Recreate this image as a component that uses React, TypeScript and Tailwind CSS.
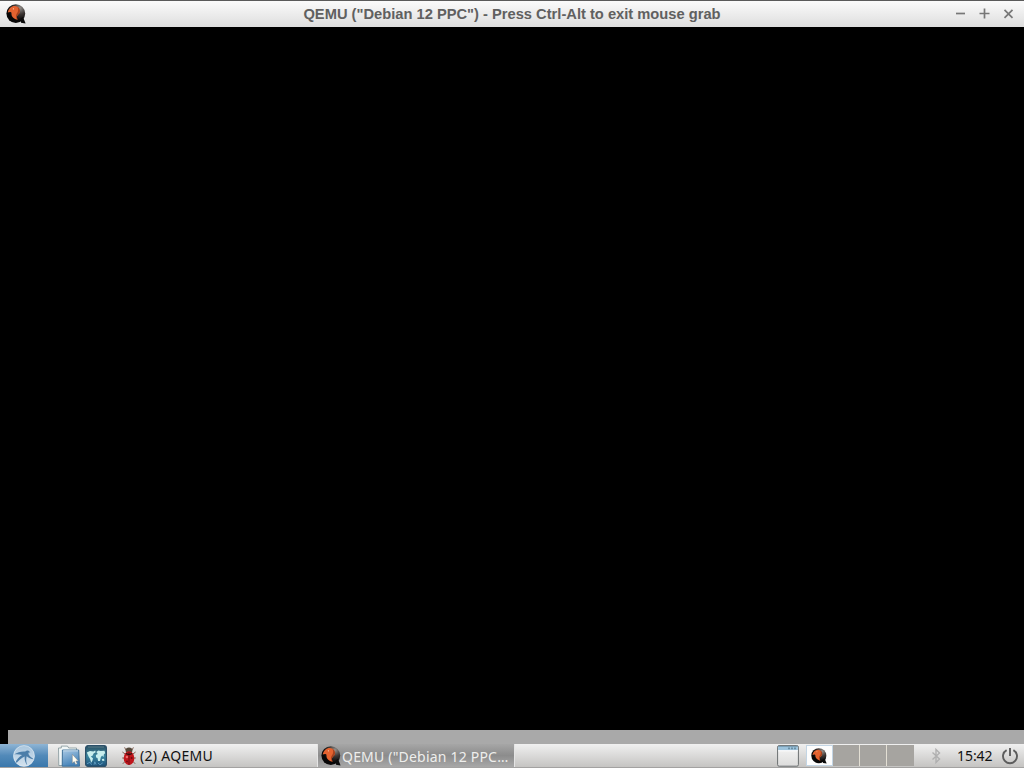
import { type ReactNode } from "react";

function QemuIcon({ id, className }: { id: string; className?: string }) {
    return (
        <svg viewBox="0 0 20 20" className={className}>
            <defs>
                <radialGradient id={id} cx="0.72" cy="0.2" r="0.65">
                    <stop offset="0" stopColor="#94908c" />
                    <stop offset="0.5" stopColor="#3d3735" />
                    <stop offset="1" stopColor="#080707" />
                </radialGradient>
            </defs>
            <circle cx="9.8" cy="9.6" r="9.4" fill={`url(#${id})`} />
            <path d="M14.5 14.5L17 13l2.6 6.4-4.6-.6z" fill="#0b0b0b" />
            <path
                d="M1.8 8.6C2.6 4.6 5.6 1.9 9 2.1c3 .2 5 2.4 5 5 0 2-1.3 3.1-2.4 4.2-1 1-1 2.2 0 4.5-2.8-.5-5.2-2.2-5.9-4.4-.4-1.4.1-2.5-.6-3.1-.8-.6-2.1-.3-3.3.3z"
                fill="#e4622f"
            />
            <path d="M11.4 2.9c1.7.9 2.6 2.4 2.6 4.2 0 2-1.3 3.1-2.4 4.2-1 1-1 2.2 0 4.5-1.4-1.3-2-3-1.5-4.6.6-1.8 2-3 2.1-5.1.1-1.2-.2-2.2-.8-3.2z" fill="#a4421f" />
            <circle cx="7.4" cy="4.8" r="0.6" fill="#f8d0b8" />
        </svg>
    );
}

function MenuLogo() {
    return (
        <svg viewBox="0 0 24 24" className="h-6 w-6">
            <defs>
                <linearGradient id="menu-disc" x1="0" y1="0" x2="0" y2="1">
                    <stop offset="0" stopColor="#a9c6de" />
                    <stop offset="1" stopColor="#d3e2ee" />
                </linearGradient>
            </defs>
            <circle cx="12" cy="12" r="10.6" fill="url(#menu-disc)" />
            <path
                d="M2 10.4C5.6 8.2 9.6 7.2 13.2 7.6c1-.9 2.2-1.4 3.3-.9l1.8 1.5-2 .6c0 2.4 2.2 4.6 6 6.6-3.4-.5-6-1.6-7.6-3.2-.9 3-.6 6.2.9 9.6-2.2-2.6-3.3-5.8-2.9-9.4-3.2 1.4-6.4 4-8.6 7.2l-.8-1.2c1.6-3.2 3.8-5.6 6.8-7.4-2.8-.8-5.4-1-8.1-.6z"
                fill="#4c7ea9"
            />
            <circle cx="12" cy="12" r="10.4" fill="none" stroke="#e5eef5" strokeWidth="0.6" />
        </svg>
    );
}

function FilesIcon() {
    return (
        <svg viewBox="0 0 22 22" className="h-[22px] w-[22px]">
            <defs>
                <linearGradient id="folder" x1="0" y1="0" x2="0.4" y2="1">
                    <stop offset="0" stopColor="#a9c9e4" />
                    <stop offset="1" stopColor="#4482b8" />
                </linearGradient>
            </defs>
            <path d="M.5 3h2.8V1.1h6.2L10.7 3h7.8v3l-14 1v13.5H.8z" fill="#f2f7f7" stroke="#819498" strokeWidth="0.8" />
            <path d="M4.4 5h16.3l.8 16.2H4.2z" fill="url(#folder)" stroke="#386c96" strokeWidth="0.9" />
            <path d="M5.2 5.8H20" stroke="#d9eaf4" strokeWidth="0.8" />
            <path d="M14.3 9.3v9l2-1.7 1.3 3 1.7-.8-1.4-2.8 2.5-.1z" fill="#fffdf0" stroke="#777d82" strokeWidth="0.5" />
        </svg>
    );
}

function GlobeIcon() {
    return (
        <svg viewBox="0 0 22 22" className="h-[22px] w-[22px]">
            <defs>
                <linearGradient id="sea" x1="0" y1="0" x2="0" y2="1">
                    <stop offset="0" stopColor="#2a4f62" />
                    <stop offset="0.5" stopColor="#3c87a0" />
                    <stop offset="1" stopColor="#1c507a" />
                </linearGradient>
            </defs>
            <rect x="0.6" y="0.6" width="20.8" height="20.8" rx="2.5" fill="url(#sea)" stroke="#2c5069" strokeWidth="1.2" />
            <path d="M3 2h16" stroke="#5b7f8c" />
            <path d="M1.8 7.4L5 6l3.4.4 1.8-.9.5 1.7-2.1 1.3-1.1 2.2-1.7.7L8 13.2l-.5 2.4-1.3 2.2-1.1-3.9-1.5-2.4z" fill="#c8eeed" />
            <path d="M11.3 6.9l2-1.4 2.4.5 3.8-.3.7 2.5-1.3 1.1-.4 2.7-1.4-1.6-1.3 1.8-.8 3.7-1.9.2-.6-3-1.4-.7-.2-2.4 1.9-1.1z" fill="#c8eeed" />
            <path d="M16.8 14l2.2-.3.4 2-2 .3z" fill="#c8eeed" />
            <path d="M2 18.8l3-1.6 1.6 2.6M9 19.8l.8-3 1.3 2.8M13 18l2 1.8 2.8-2" fill="none" stroke="#67a5c8" strokeWidth="0.8" />
        </svg>
    );
}

function BugIcon() {
    return (
        <svg viewBox="0 0 16 20" className="h-5 w-4">
            <path d="M5 4L3.6 1.4M11 4l1.4-2.6M4 8L1.4 6M12 8l2.6-2M3.5 12H1.2M12.5 12h2.3M4 15.5l-2.2 2.3M12 15.5l2.2 2.3" stroke="#806052" strokeWidth="1" fill="none" />
            <ellipse cx="8" cy="4.4" rx="3.4" ry="3" fill="#54483a" />
            <ellipse cx="8" cy="12.2" rx="5.3" ry="6.9" fill="#c0161c" />
            <path d="M8 6v13" stroke="#610a10" strokeWidth="0.8" fill="none" />
            <path d="M5 7.4c2 1.2 4 1.2 6 0" stroke="#2b1210" strokeWidth="1.2" fill="none" />
            <circle cx="5.9" cy="11" r="1.3" fill="#ef6a6a" />
            <circle cx="10.6" cy="12" r="1" fill="#740b13" />
            <circle cx="6" cy="15.4" r="0.9" fill="#740b13" />
        </svg>
    );
}

function WindowIcon() {
    return (
        <svg viewBox="0 0 22 22" className="h-[22px] w-[22px]">
            <defs>
                <linearGradient id="window-body" x1="0" y1="0" x2="0" y2="1">
                    <stop offset="0" stopColor="#f6f6f6" />
                    <stop offset="1" stopColor="#dcdcdb" />
                </linearGradient>
            </defs>
            <rect x="0.6" y="0.6" width="20.8" height="20.6" rx="1.5" fill="url(#window-body)" stroke="#6b6f70" strokeWidth="1" />
            <path d="M1.1 1.1h19.8v4.2H1.1z" fill="#9cc3dc" />
            <path d="M1.1 1.3h19.8" stroke="#5b7f95" strokeWidth="0.7" />
            <path d="M11 3.4h9" stroke="#6a90a6" strokeWidth="1.6" strokeDasharray="2 1" />
            <path d="M1.1 5.8h19.8" stroke="#fff" />
        </svg>
    );
}

function TitleButton({ children }: { children: ReactNode }) {
    return (
        <button className="flex h-6 w-6 items-center justify-center">
            <svg viewBox="0 0 12 12" className="h-3 w-3" fill="none" stroke="#777" strokeWidth="1.7">
                {children}
            </svg>
        </button>
    );
}

function TitleBar() {
    return (
        <header className="grid h-[27px] shrink-0 grid-cols-[76px_1fr_76px] items-center border-t border-[#5b5b5b] bg-linear-to-b from-[#fbfbfb] to-[#dedede]">
            <QemuIcon id="qemu-title" className="ml-1.5 h-5 w-5" />
            <h1 className="text-center font-['Liberation_Sans',sans-serif] text-[14.7px] leading-5 font-bold whitespace-nowrap text-[#606060]">
                QEMU ("Debian 12 PPC") - Press Ctrl-Alt to exit mouse grab
            </h1>
            <div className="flex pl-px">
                <TitleButton>
                    <path d="M1 5.5h9" />
                </TitleButton>
                <TitleButton>
                    <path d="M.5 5.5h10M5.5.5v10" />
                </TitleButton>
                <TitleButton>
                    <path d="M1.5 1.9l8 8M9.5 1.9l-8 8" />
                </TitleButton>
            </div>
        </header>
    );
}

function Taskbar() {
    return (
        <footer className="flex h-6 shrink-0 items-center overflow-hidden border-b border-[#a3a2a1] bg-linear-to-b from-[#f0f0f0] to-[#c5c4c2] font-['Noto_Sans',sans-serif] text-[14px] leading-5">
            <button className="flex h-full w-12 shrink-0 items-center justify-center bg-linear-to-b from-[#8fb5d5] via-[#528ab9] to-[#3a78ac]">
                <MenuLogo />
            </button>
            <div className="ml-2.5 flex w-[62px] shrink-0 gap-[5px]">
                <FilesIcon />
                <GlobeIcon />
            </div>
            <button className="flex h-full w-[197px] items-center gap-[3px] pl-px text-[#111]">
                <BugIcon />
                <span className="text-[14px] tracking-[0.3px]">(2) AQEMU</span>
            </button>
            <button className="flex h-full w-[198px] items-center gap-px border-x border-[#e4e4e4] bg-linear-to-b from-[#a6a6a6] via-[#8c8c8c] to-[#a8a8a8] pl-[3px] text-[#eeeeec]">
                <QemuIcon id="qemu-task" className="h-5 w-5 shrink-0" />
                <span className="pt-0.5 text-[14px] tracking-[0.2px] whitespace-nowrap">QEMU ("Debian 12 PPC…</span>
            </button>
            <div className="ml-auto flex h-full items-center">
                <WindowIcon />
                <div className="ml-[7px] grid h-[21px] grid-cols-[27px_27px_27px_27px]">
                    <div className="flex items-center justify-center border border-[#c3d5e4] bg-[#fdfdfd] pr-0.5">
                        <QemuIcon id="qemu-pager" className="h-4 w-4" />
                    </div>
                    <div className="border-r border-[#e3dfd4] bg-[#a6a4a0]" />
                    <div className="border-r border-[#e3dfd4] bg-[#a6a4a0]" />
                    <div className="bg-[#a6a4a0]" />
                </div>
                <div className="flex h-full w-[110px] items-center">
                    <svg viewBox="0 0 10 16" className="ml-[17px] h-4 w-2.5" fill="none" stroke="#b0b0b0" strokeWidth="1.4">
                        <path d="M1.5 4.5l7 6.5L5 14.5v-13L8.5 5l-7 6.5" />
                    </svg>
                    <time className="ml-4 w-[38px] text-[14px] tracking-[-0.05px] text-[#111]">15:42</time>
                    <svg viewBox="0 0 18 18" className="ml-1.5 h-[18px] w-[18px]" fill="none" stroke="#5d5d5d" strokeWidth="1.9">
                        <path d="M5.6 3.1a7 7 0 1 0 6.8 0M9 1v8" />
                    </svg>
                </div>
            </div>
        </footer>
    );
}

export default function App() {
    return (
        <div className="flex h-screen w-screen flex-col overflow-hidden bg-black select-none">
            <TitleBar />
            <main className="flex-1 bg-black" />
            <div className="ml-2 h-3.5 shrink-0 bg-[#a9a9a9]" />
            <Taskbar />
        </div>
    );
}
